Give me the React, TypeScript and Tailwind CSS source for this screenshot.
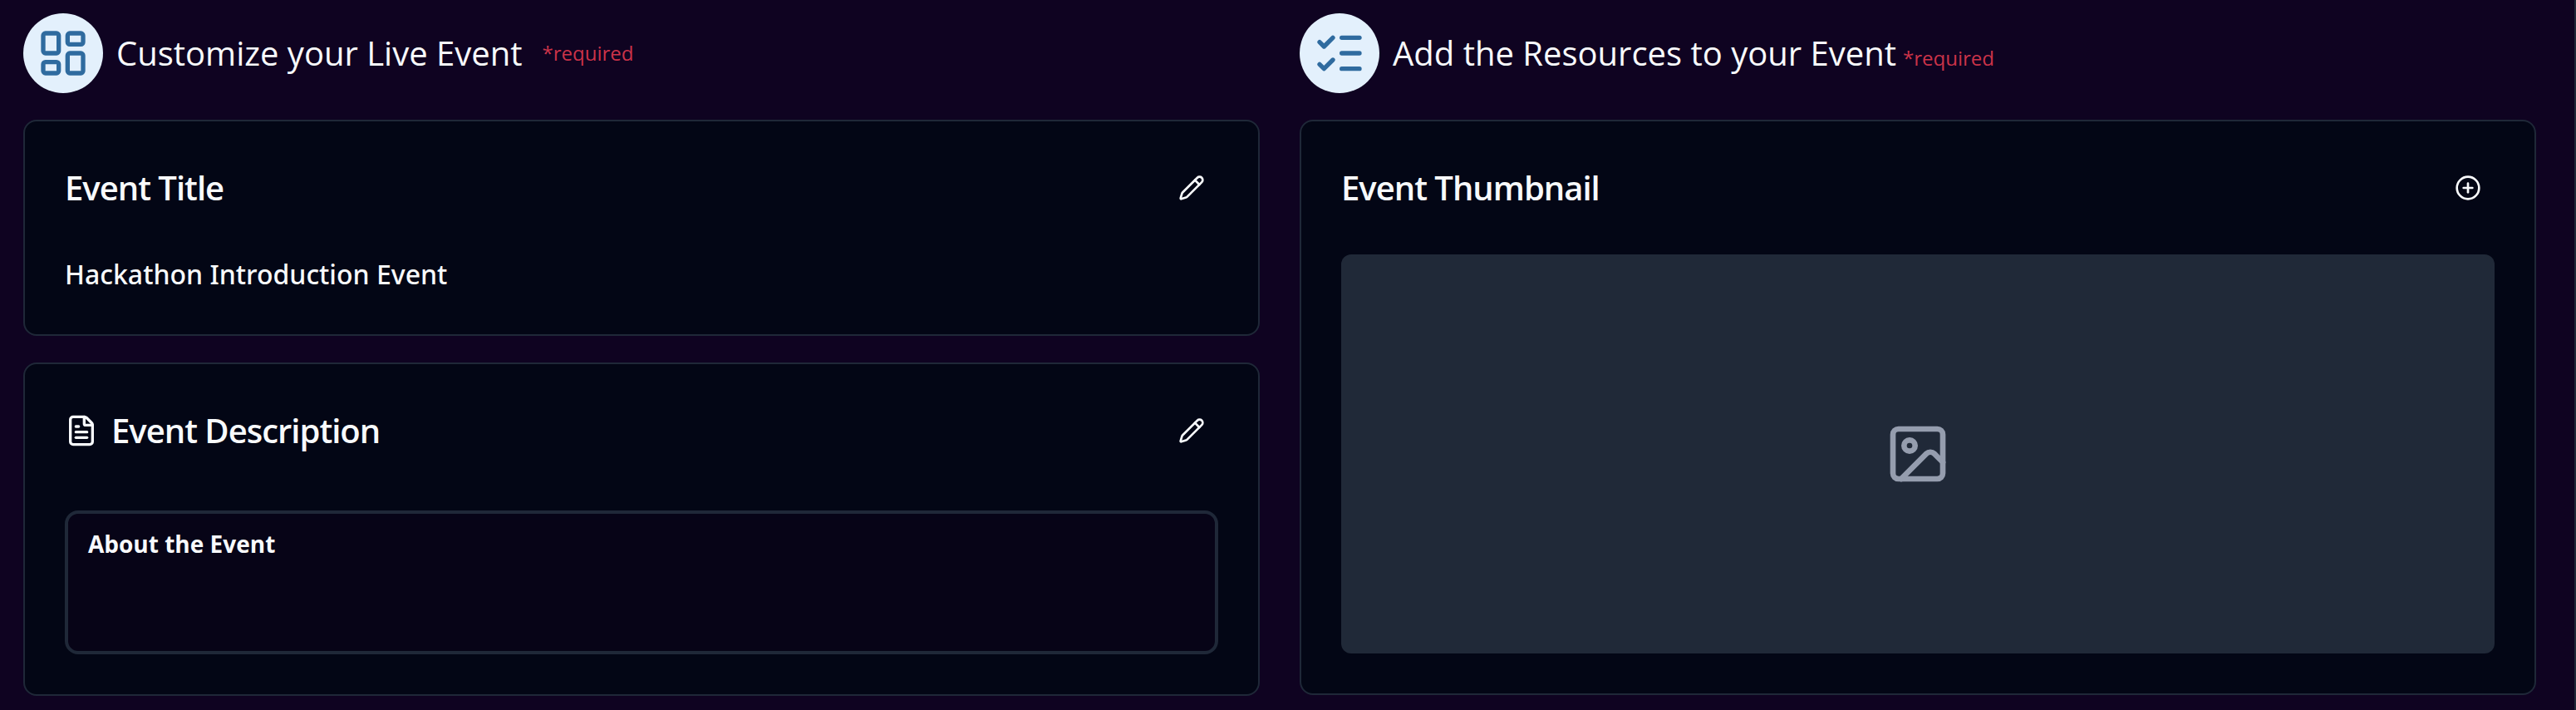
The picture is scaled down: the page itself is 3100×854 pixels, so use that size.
import { CirclePlus, FileText, Image, LayoutDashboard, ListChecks, Pencil } from "lucide-react";
import type { ReactNode } from "react";

function SectionHeading({ icon, children }: { icon: ReactNode; children: ReactNode }) {
  return (
    <header className="flex items-center gap-4">
      <span className="flex size-24 shrink-0 items-center justify-center rounded-full bg-[#e3f0fc] text-[#2f6b9f]">
        {icon}
      </span>
      {children}
    </header>
  );
}

function Card({ title, icon, action, children }: { title: string; icon?: ReactNode; action: ReactNode; children: ReactNode }) {
  return (
    <section className="rounded-2xl border-2 border-[#1f2838] bg-[#030615] p-12">
      <div className="flex h-16 items-center justify-between">
        <h3 className="flex items-center gap-4 text-[40px] leading-[56px] font-semibold tracking-tight">
          {icon}
          {title}
        </h3>
        {action}
      </div>
      {children}
    </section>
  );
}

function IconButton({ label, children }: { label: string; children: ReactNode }) {
  return (
    <button type="button" aria-label={label} className="flex size-16 items-center justify-center">
      {children}
    </button>
  );
}

export default function App() {
  return (
    <main className="grid min-h-screen grid-cols-2 items-start gap-12 border-r-2 border-[#1f2838] bg-[#0f0321] py-4 pr-[46px] pl-7 font-['Open_Sans',sans-serif] text-[#f8fafc]">
      <div className="flex flex-col gap-8">
        <SectionHeading icon={<LayoutDashboard className="size-16" />}>
          <h2 className="text-[40px] leading-[56px]">Customize your Live Event</h2>
          <span className="ml-2 text-2xl text-[#cc3349]">*required</span>
        </SectionHeading>
        <Card title="Event Title" action={<IconButton label="Edit title"><Pencil className="size-8" /></IconButton>}>
          <p className="mt-12 font-['Noto_Sans',sans-serif] text-[32px] leading-[48px] font-medium">
            Hackathon Introduction Event
          </p>
        </Card>
        <Card
          title="Event Description"
          icon={<FileText className="size-10" />}
          action={<IconButton label="Edit description"><Pencil className="size-8" /></IconButton>}
        >
          <div className="mt-16 min-h-[173px] rounded-2xl border-4 border-[#1f2838] bg-[#070417] px-6 py-4">
            <h4 className="text-[28px] leading-[40px] font-bold">About the Event</h4>
          </div>
        </Card>
      </div>
      <div className="flex flex-col gap-8">
        <SectionHeading icon={<ListChecks className="size-16" />}>
          <h2 className="text-[40px] leading-[56px]">
            Add the Resources to your Event
            <span className="ml-2 text-2xl text-[#cc3349]">*required</span>
          </h2>
        </SectionHeading>
        <Card title="Event Thumbnail" action={<IconButton label="Add thumbnail"><CirclePlus className="size-8" /></IconButton>}>
          <div className="mt-12 flex h-[480px] items-center justify-center rounded-xl bg-[#202938] text-[#959dae]">
            <Image className="size-20" />
          </div>
        </Card>
      </div>
    </main>
  );
}
